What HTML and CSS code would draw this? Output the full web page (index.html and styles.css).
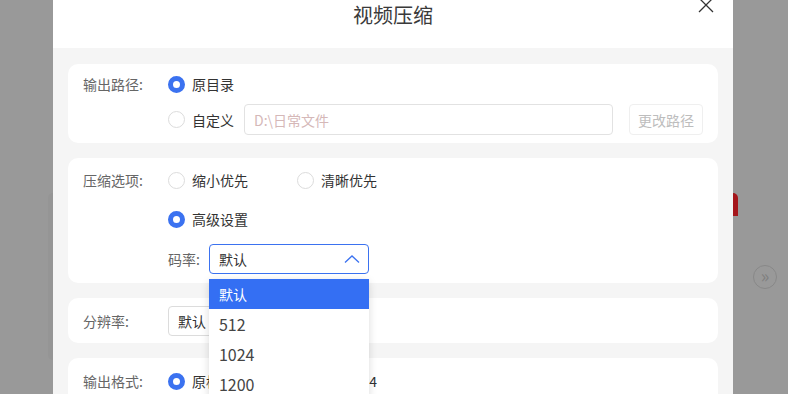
FILE: index.html
```html
<!DOCTYPE html>
<html>
<head>
  <meta charset="UTF-8">
  <title>视频压缩</title>
  <link rel="stylesheet" href="styles.css">
</head>
<body>
  <!-- página de fondo, tapada por la capa gris -->
  <div class="lado-izq">
    <div class="panel-fondo"></div>
  </div>

  <div class="modal">
    <div class="modal-cabecera">
      <div class="modal-titulo">视频压缩</div>
      <svg class="cerrar" viewBox="0 0 16 16" width="16" height="16">
        <path d="M1 1 L15 15 M15 1 L1 15" stroke="#333" stroke-width="1.3" fill="none"/>
      </svg>
    </div>

    <div class="modal-cuerpo">
      <!-- Ruta de salida -->
      <div class="tarjeta">
        <div class="fila alto-24">
          <span class="etiqueta">输出路径:</span>
          <label class="opcion"><span class="radio marcado"></span>原目录</label>
        </div>
        <div class="fila alto-31 sangria sep-8">
          <label class="opcion"><span class="radio"></span>自定义</label>
          <input class="ruta" type="text" placeholder="D:\日常文件">
          <button class="boton-ruta">更改路径</button>
        </div>
      </div>

      <!-- Opciones de compresión -->
      <div class="tarjeta tarjeta-compresion">
        <div class="fila alto-28">
          <span class="etiqueta">压缩选项:</span>
          <label class="opcion ancha"><span class="radio"></span>缩小优先</label>
          <label class="opcion"><span class="radio"></span>清晰优先</label>
        </div>
        <div class="fila alto-28 sangria sep-11">
          <label class="opcion"><span class="radio marcado"></span>高级设置</label>
        </div>
        <div class="fila alto-30 sangria sep-11">
          <span class="etiqueta-corta">码率:</span>
          <div class="selector-caja">
            <div class="selector abierto">
              <span>默认</span>
              <svg viewBox="0 0 16 8" width="16" height="8">
                <path d="M1 7.5 L8 1 L15 7.5" stroke="#3b72f0" stroke-width="1.3" fill="none"/>
              </svg>
            </div>
            <ul class="desplegable">
              <li class="activo">默认</li>
              <li class="numero">512</li>
              <li class="numero">1024</li>
              <li class="numero">1200</li>
            </ul>
          </div>
        </div>
      </div>

      <!-- Resolución -->
      <div class="tarjeta tarjeta-resolucion">
        <div class="fila alto-30">
          <span class="etiqueta">分辨率:</span>
          <div class="selector">
            <span>默认</span>
          </div>
        </div>
      </div>

      <!-- Formato de salida -->
      <div class="tarjeta">
        <div class="fila alto-30">
          <span class="etiqueta">输出格式:</span>
          <label class="opcion ancha"><span class="radio marcado"></span>原格式</label>
          <label class="opcion"><span class="radio"></span>转为MP4</label>
        </div>
      </div>
    </div>
  </div>

  <div class="lado-der">
    <div class="pestana-roja"></div>
    <div class="circulo">&raquo;</div>
  </div>
</body>
</html>
```

FILE: styles.css
```css
:root {
  --azul: #3b72f0;
  --azul-activo: #346ff3;
  --texto: #333333;
  --texto-suave: #666666;
  --borde: #e2e2e2;
  --fondo-modal: #f5f5f5;
  --capa: #999999;
}
* {
  box-sizing: border-box;
}
body {
  margin: 0;
  height: 394px;
  overflow: hidden;
  background: var(--capa);
  display: flex;
  font-family: "Noto Sans CJK SC", "Noto Sans", sans-serif;
  font-size: 14px;
  color: var(--texto);
}
/* Restos de la página de fondo */
.lado-izq {
  width: 53px;
  flex-shrink: 0;
  padding-top: 193px;
}
.panel-fondo {
  margin-left: 48px;
  height: 167px;
  background: #959595;
  border-radius: 6px 0 0 6px;
}
.lado-der {
  width: 55px;
  flex-shrink: 0;
  padding-top: 193px;
}
.pestana-roja {
  width: 5px;
  height: 23px;
  background: #a5161b;
  border-radius: 0 5px 0 0;
}
.circulo {
  width: 24px;
  height: 24px;
  margin: 49px 0 0 20px;
  border: 1px solid #888;
  border-radius: 50%;
  color: #808080;
  font-size: 18px;
  line-height: 19px;
  text-align: center;
}
/* Ventana modal */
.modal {
  width: 680px;
  flex-shrink: 0;
  background: var(--fondo-modal);
  display: flex;
  flex-direction: column;
}
.modal-cabecera {
  height: 48px;
  flex-shrink: 0;
  background: #fff;
  position: relative;
  text-align: center;
}
.modal-titulo {
  padding-top: 3px;
  font-size: 20px;
  line-height: 24px;
  color: #3a3a3a;
}
.cerrar {
  position: absolute;
  top: -3px;
  right: 19px;
}
.modal-cuerpo {
  padding: 16px 15px 0;
  display: flex;
  flex-direction: column;
  gap: 15px;
}
.tarjeta {
  flex-shrink: 0;
  background: #fff;
  border-radius: 10px;
  padding: 8px 15px;
}
.tarjeta-compresion {
  padding-bottom: 9px;
}
.tarjeta-resolucion {
  padding-bottom: 7px;
}
.fila {
  display: flex;
  align-items: center;
}
.alto-24 { height: 24px; }
.alto-28 { height: 28px; }
.alto-30 { height: 30px; }
.alto-31 { height: 31px; }
.sep-8 { margin-top: 8px; }
.sep-11 { margin-top: 11px; }
.sangria {
  padding-left: 85px;
}
.etiqueta {
  width: 85px;
  color: var(--texto-suave);
}
.etiqueta-corta {
  color: var(--texto-suave);
  margin-right: 9px;
}
.opcion {
  display: inline-flex;
  align-items: center;
  gap: 7px;
  cursor: pointer;
}
.opcion.ancha {
  width: 129px;
}
.radio {
  width: 17px;
  height: 17px;
  border-radius: 50%;
  border: 1px solid #dcdcdc;
  background: #fff;
}
.radio.marcado {
  border: 5px solid var(--azul);
}
.ruta {
  flex: 1;
  height: 31px;
  margin-left: 10px;
  padding: 0 9px;
  border: 1px solid var(--borde);
  border-radius: 4px;
  font-family: inherit;
  font-size: 14px;
  outline: none;
}
.ruta::placeholder {
  color: #d5b8b8;
}
.boton-ruta {
  width: 74px;
  height: 31px;
  margin-left: 16px;
  border: 1px solid #efefef;
  border-radius: 4px;
  background: #fff;
  color: #bdbdbd;
  font-family: inherit;
  font-size: 14px;
  padding: 0;
}
/* Selectores */
.selector-caja {
  position: relative;
}
.selector {
  width: 160px;
  height: 30px;
  padding: 0 8px 0 9px;
  border: 1px solid #dcdcdc;
  border-radius: 4px;
  display: flex;
  align-items: center;
  justify-content: space-between;
  color: var(--texto);
}
.selector.abierto {
  border-color: var(--azul);
}
.desplegable {
  position: absolute;
  top: 35px;
  left: 0;
  width: 160px;
  margin: 0;
  padding: 0;
  list-style: none;
  background: #fff;
  border-radius: 4px 4px 0 0;
  box-shadow: 0 2px 8px rgba(0, 0, 0, 0.15);
  z-index: 5;
}
.desplegable li {
  height: 30px;
  line-height: 30px;
  padding: 0 10px;
  color: #3a3a3a;
}
.desplegable li.numero {
  font-size: 16px;
  color: #444;
}
.desplegable li.activo {
  background: var(--azul-activo);
  color: #fff;
}
```
